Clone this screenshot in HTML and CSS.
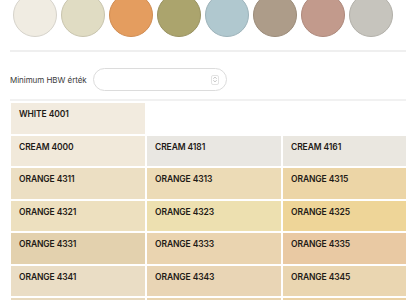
FILE: index.html
```html
<!DOCTYPE html>
<html lang="hu">
<head>
    <meta charset="UTF-8">
    <meta name="viewport" content="width=device-width, initial-scale=1.0">
    <title>Színválasztó</title>
    <link rel="stylesheet" href="styles.css">
</head>
<body>
    <div class="page">
        <div class="swatches">
            <span class="swatch sw-white"></span>
            <span class="swatch sw-cream"></span>
            <span class="swatch sw-orange"></span>
            <span class="swatch sw-olive"></span>
            <span class="swatch sw-blue"></span>
            <span class="swatch sw-brown"></span>
            <span class="swatch sw-rose"></span>
            <span class="swatch sw-grey"></span>
        </div>

        <div class="filter">
            <label for="hbw">Minimum HBW érték</label>
            <div class="number-input">
                <input type="text" id="hbw">
                <span class="spinner">
                    <svg width="7" height="9" viewBox="0 0 7 9">
                        <path d="M1.5 3.5 L3.5 1.8 L5.5 3.5" fill="none" stroke="#b5b5b5" stroke-width="0.9"/>
                        <path d="M1.5 5.5 L3.5 7.2 L5.5 5.5" fill="none" stroke="#b5b5b5" stroke-width="0.9"/>
                    </svg>
                </span>
            </div>
        </div>

        <div class="colors">
            <div class="group">
                <div class="cell c-4001">WHITE 4001</div>
            </div>
            <div class="group">
                <div class="cell c-4000">CREAM 4000</div>
                <div class="cell c-4181">CREAM 4181</div>
                <div class="cell c-4161">CREAM 4161</div>
            </div>
            <div class="group">
                <div class="cell c-4311">ORANGE 4311</div>
                <div class="cell c-4313">ORANGE 4313</div>
                <div class="cell c-4315">ORANGE 4315</div>
                <div class="cell c-4321">ORANGE 4321</div>
                <div class="cell c-4323">ORANGE 4323</div>
                <div class="cell c-4325">ORANGE 4325</div>
                <div class="cell c-4331">ORANGE 4331</div>
                <div class="cell c-4333">ORANGE 4333</div>
                <div class="cell c-4335">ORANGE 4335</div>
                <div class="cell c-4341">ORANGE 4341</div>
                <div class="cell c-4343">ORANGE 4343</div>
                <div class="cell c-4345">ORANGE 4345</div>
                <div class="cell c-4351"></div>
                <div class="cell c-4353"></div>
                <div class="cell c-4355"></div>
            </div>
        </div>
    </div>
</body>
</html>
```

FILE: styles.css
```css
* {
    margin: 0;
    padding: 0;
    box-sizing: border-box;
}

body {
    background: #fff;
    font-family: Inter, 'Noto Sans', sans-serif;
    color: #222;
    overflow: hidden;
}

.page {
    padding-left: 10px;
    width: 420px;
}

/* szín körök */
.swatches {
    display: flex;
    gap: 4px;
    padding-left: 3px;
    margin-top: -7px;
    padding-bottom: 13px;
    border-bottom: 2px solid #efefef;
    width: 396px;
}

.swatch {
    width: 44px;
    height: 44px;
    border-radius: 50%;
    border: 1px solid rgba(0, 0, 0, 0.12);
    flex-shrink: 0;
}

.sw-white  { background: #f0ece2; border-color: #d6d3cb; }
.sw-cream  { background: #e0dcc3; border-color: #c9c5ae; }
.sw-orange { background: #e49d5f; border-color: #d08c52; }
.sw-olive  { background: #aba46d; border-color: #999261; }
.sw-blue   { background: #b0c8cf; border-color: #9db3ba; }
.sw-brown  { background: #ad9c89; border-color: #9b8b79; }
.sw-rose   { background: #c29a8c; border-color: #ae897c; }
.sw-grey   { background: #c6c4bd; border-color: #b2b0a9; }

/* szűrő */
.filter {
    display: flex;
    align-items: center;
    gap: 6px;
    height: 49px;
    padding-top: 8px;
    border-bottom: 2px solid #f1f1f1;
    width: 396px;
}

.filter label {
    font-size: 8px;
    color: #3a3a3a;
    letter-spacing: -0.05px;
}

.number-input {
    display: flex;
    align-items: center;
    width: 134px;
    height: 23px;
    border: 1px solid #dcdcdc;
    border-radius: 12px;
    padding: 0 7px 0 10px;
}

.number-input input {
    flex: 1;
    min-width: 0;
    border: none;
    outline: none;
    background: transparent;
    font-size: 8px;
}

.spinner {
    display: flex;
    align-items: center;
    justify-content: center;
    width: 8px;
    height: 10px;
    border: 1px solid #e3e3e3;
    border-radius: 2px;
}

/* színkártyák */
.colors {
    display: flex;
    flex-direction: column;
    gap: 2px;
    padding-top: 2px;
    margin-left: 1px;
}

.group {
    display: grid;
    grid-template-columns: repeat(3, 134px);
    grid-auto-rows: 30.5px;
    gap: 2px;
}

.cell {
    font-size: 8.5px;
    font-weight: 600;
    color: #1e1a16;
    padding: 6px 0 0 8px;
    letter-spacing: -0.1px;
}

.c-4001 { background: #f2ebdf; }
.c-4000 { background: #f1e9da; }
.c-4181 { background: #e9e7e2; }
.c-4161 { background: #eae7e0; }
.c-4311 { background: #ecdfc3; }
.c-4313 { background: #ecdbb6; }
.c-4315 { background: #ecd5a6; }
.c-4321 { background: #ede0bf; }
.c-4323 { background: #ede0b0; }
.c-4325 { background: #eed598; }
.c-4331 { background: #e3d1ae; }
.c-4333 { background: #ead4b0; }
.c-4335 { background: #e9c9a3; }
.c-4341 { background: #eaddc5; }
.c-4343 { background: #e9d5b5; }
.c-4345 { background: #ead6b1; }
.c-4351 { background: #e8d9bd; }
.c-4353 { background: #e9d4ae; }
.c-4355 { background: #ebd2a4; }
```
